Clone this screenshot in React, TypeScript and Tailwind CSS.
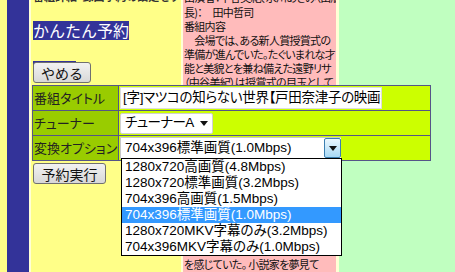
import React from 'react';

const JP = "font-['Noto_Sans_CJK_JP','Noto_Sans_CJK_SC',sans-serif]";
const UI = "font-['Liberation_Sans','Noto_Sans_CJK_JP',sans-serif] [font-feature-settings:'palt']";

// 右の番組説明 (表の下に隠れる行もそのまま流す)
const DESC_LINES = [
  '出演者：中谷美紀、水川あさみ（出版社',
  '長)：　田中哲司',
  '番組内容',
  '　会場では、ある新人賞授賞式の',
  '準備が進んでいた。たぐいまれな才',
  '能と美貌とを兼ね備えた遠野リサ',
  '（中谷美紀）は授賞式の目玉として',
  '壇上に立つ。その華やかな姿を、',
  '会場の隅から見つめる女性がいた。',
  '川原由樹（水川あさみ）である。',
  '由樹は地方から上京したばかりで、',
  'リサの作品に強いあこがれを抱い',
  'ていた。一方、リサの担当編集者',
  'である小田颯人（三浦翔平）は、',
  '最近のリサの原稿にどこか違和感',
  'を覚えながらも、それを口に出せ',
  'ずにいた。リサ自身もまた、書け',
  'ない日々が続くことに焦りと不安',
  'を抱え、誰にも言えない孤独',
  'を感じていた。 小説家を夢見て',
];

const OPTIONS = [
  '1280x720高画質(4.8Mbps)',
  '1280x720標準画質(3.2Mbps)',
  '704x396高画質(1.5Mbps)',
  '704x396標準画質(1.0Mbps)',
  '1280x720MKV字幕のみ(3.2Mbps)',
  '704x396MKV字幕のみ(1.0Mbps)',
];
const SELECTED = 3;

function Caret() {
  return (
    <svg width="8" height="5" viewBox="0 0 8 5" className="shrink-0">
      <path d="M0 0h8L4 5z" fill="#111" />
    </svg>
  );
}

function Btn({ label, w }: { label: string; w: string }) {
  return (
    <div
      className={`${w} h-[21px] ml-px flex items-center justify-center rounded-[3px] border border-[#707070] bg-gradient-to-b from-[#f2f2f2] to-[#d8d8d8] text-[14px] leading-none text-[#111]`}
    >
      {label}
    </div>
  );
}

function Row({ label, children }: { label: string; children: React.ReactNode }) {
  return (
    <>
      <div className="h-[24px] bg-[#99cc00] pl-px flex items-center text-[13px] text-[#222] [font-feature-settings:'palt']">
        {label}
      </div>
      <div className="h-[24px] bg-[#ccff00] pl-px flex items-center">{children}</div>
    </>
  );
}

export default function App() {
  return (
    <div className={`relative w-[455px] h-[272px] overflow-hidden flex bg-[#ffffd6] ${JP}`}>
      <div className="w-[7px] bg-[#ffff88]" />
      <div className="w-[22px] bg-[#333399]" />

      {/* メイン列 */}
      <div className="w-[150px] ml-[2px] bg-[#ffff88] pl-[2px] overflow-hidden">
        <div className="-mt-[11px] h-[14px] text-[11px] leading-[14px] font-bold text-[#333] whitespace-nowrap [font-feature-settings:'palt']">
          番組詳細・録画予約の設定をする画面
        </div>
        <div className="mt-[15px]">
          <span className="inline-block h-[19px] bg-[#333399] text-white text-[16px] leading-[19px]">
            かんたん予約
          </span>
        </div>
        <div className="mt-[16px]">
          <span className="inline-block w-[43px] h-[19px] bg-[#333399] text-white text-[16px] leading-[19px] pl-[3px]">
            予約
          </span>
        </div>
      </div>

      {/* 番組説明 */}
      <div className="w-[153px] ml-[2px] bg-[#ffbbbb] pl-px text-[11px] leading-[14px] tracking-[-0.7px] text-[#111] [font-feature-settings:'palt'] overflow-hidden">
        <div className="-mt-[10px]">
          {DESC_LINES.map((l, i) => (
            <div key={i} className={`whitespace-nowrap h-[14px] ${i === 0 ? '-mt-px mb-px' : ''}`}>{l}</div>
          ))}
        </div>
      </div>

      <div className="flex-1 ml-[3px] bg-[#c0ffc0]" />

      {/* 予約フォーム (ページの上に重なる) */}
      <div className="absolute left-[32px] top-[62px] w-[399px]">
        <Btn label="やめる" w="w-[58px]" />
        <div className="mt-[2px] grid grid-cols-[85px_1fr] gap-px p-px bg-[#555588]">
          <Row label="番組タイトル">
            <div className={`w-[262px] h-[22px] bg-white border border-[#dcdcdc] pl-[2px] flex items-center text-[13.5px] tracking-[-0.3px] text-black whitespace-nowrap overflow-hidden ${UI}`}>
              [字]マツコの知らない世界【戸田奈津子の映画字幕】
            </div>
          </Row>
          <Row label="チューナー">
            <div className={`w-[93px] h-[21px] bg-white border border-[#d0d0d0] rounded-[2px] pl-[4px] pr-[4px] flex items-center justify-between text-[13.5px] text-black ${UI}`}>
              <span className="tracking-[-0.6px]">チューナーA</span>
              <Caret />
            </div>
          </Row>
          <Row label="変換オプション">
            <div className={`w-[221px] h-[22px] bg-white border border-[#c8c8c8] border-r-0 pl-[4px] flex items-center justify-between text-[13.5px] text-black ${UI}`}>
              <span>704x396標準画質(1.0Mbps)</span>
              <div className="w-[17px] h-[20px] rounded-[2px] border border-[#3c7fb1] bg-gradient-to-b from-[#eaf6fd] to-[#a7d9f5] flex items-center justify-center">
                <Caret />
              </div>
            </div>
          </Row>
        </div>
        <div className="mt-[2px]">
          <Btn label="予約実行" w="w-[73px]" />
        </div>

        {/* 開いたドロップダウン */}
        <div className={`absolute left-[89px] top-[96px] w-[221px] bg-white border border-black ${UI}`}>
          {OPTIONS.map((o, i) => (
            <div
              key={o}
              className={`h-[16px] pl-[3px] flex items-center text-[13.5px] leading-none whitespace-nowrap ${
                i === SELECTED ? 'bg-[#3399ff] text-white' : 'text-black'
              }`}
            >
              {o}
            </div>
          ))}
        </div>
      </div>
    </div>
  );
}
